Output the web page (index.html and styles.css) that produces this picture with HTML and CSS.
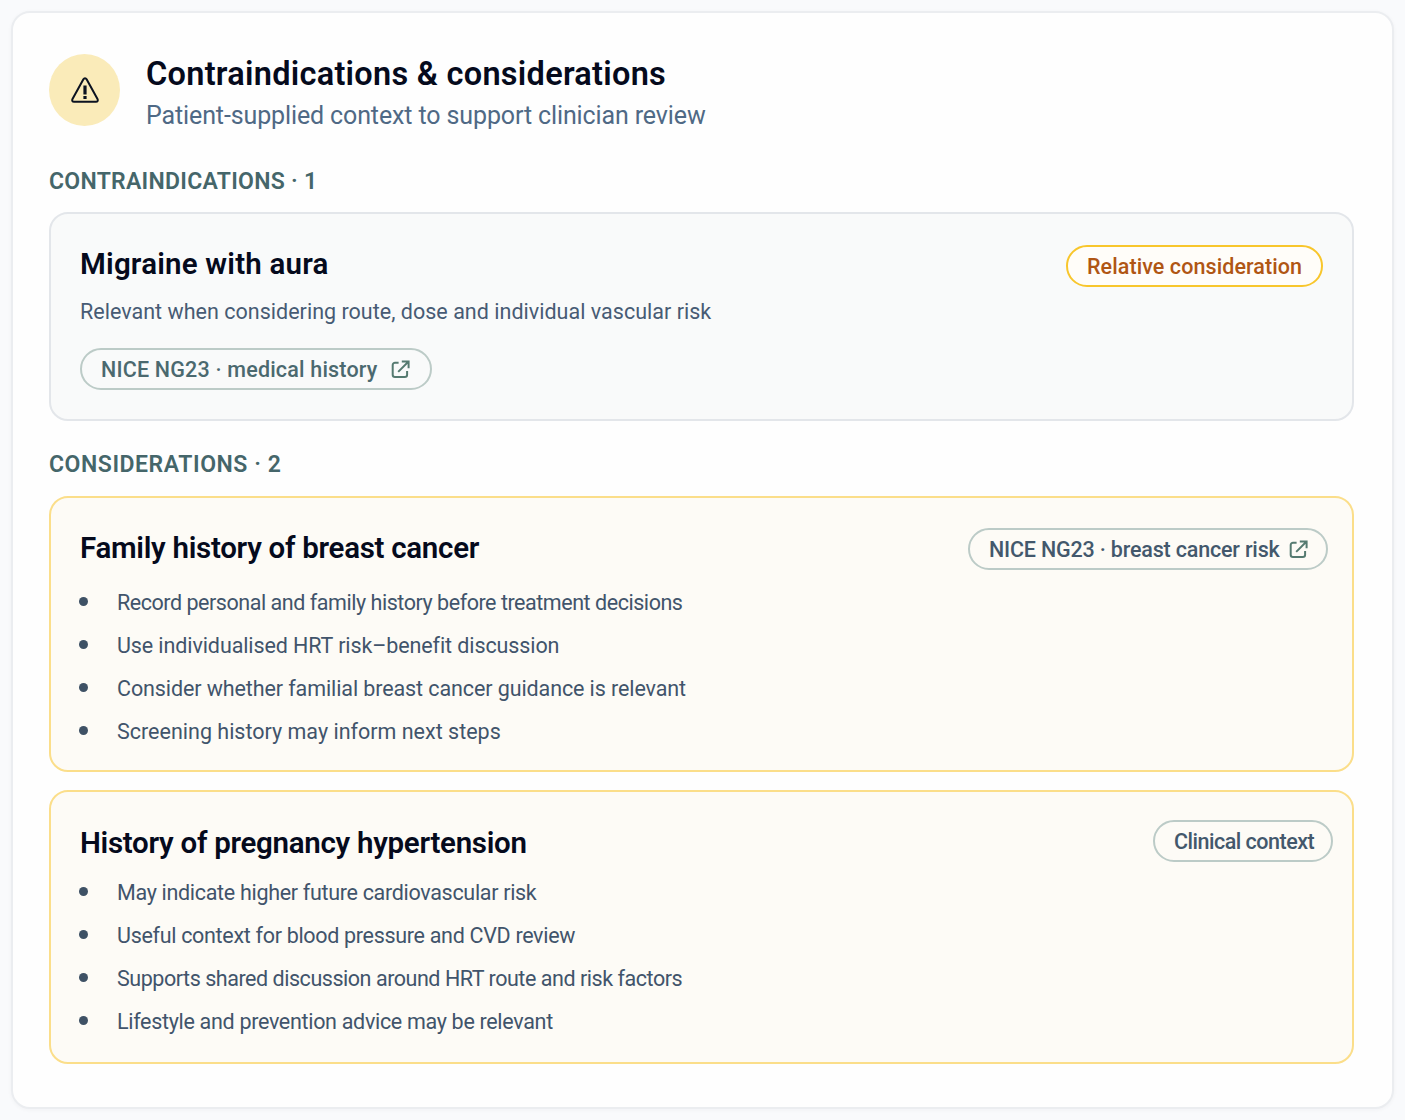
FILE: index.html
```html
<!DOCTYPE html>
<html lang="en">
<head>
    <meta charset="UTF-8">
    <title>Contraindications &amp; considerations</title>
    <link rel="stylesheet" href="styles.css">
</head>
<body>

<main class="panel">
    <header class="panel-header">
        <div class="warn-icon">
            <svg width="30" height="28" viewBox="0 0 30 28" fill="none" stroke="#0b1220">
                <path d="M13.4 3.2 2.5 23.1C1.7 24.5 2.4 25.7 4 25.7h22c1.6 0 2.3-1.2 1.5-2.6L16.6 3.2c-.8-1.4-2.4-1.4-3.2 0z" stroke-width="2" stroke-linejoin="round"/>
                <path d="M15 9.4v9M15 19.9v3.2" stroke-width="3.2"/>
            </svg>
        </div>
        <div>
            <h1 class="title">Contraindications &amp; considerations</h1>
            <p class="subtitle">Patient-supplied context to support clinician review</p>
        </div>
    </header>

    <h2 class="section">CONTRAINDICATIONS · 1</h2>
    <section class="card card-grey">
        <div>
            <h3 class="name name-wide">Migraine with aura</h3>
            <p class="desc">Relevant when considering route, dose and individual vascular risk</p>
            <a class="pill pill-source">NICE NG23 · medical history
                <svg width="19" height="19" viewBox="0 0 19 19" fill="none" stroke="#557a70" stroke-width="2">
                    <path d="M7.6 2.7H4A2.3 2.3 0 0 0 1.7 5v9.8A2.3 2.3 0 0 0 4 17.1h9.8a2.3 2.3 0 0 0 2.3-2.3v-3.9M10.8 1.5h6.8v6.8M17.3 1.8 7.2 11.9"/>
                </svg>
            </a>
        </div>
        <span class="pill pill-amber">Relative consideration</span>
    </section>

    <h2 class="section section-second">CONSIDERATIONS · 2</h2>
    <section class="card">
        <div>
            <h3 class="name">Family history of breast cancer</h3>
            <ul class="points">
                <li class="tight-3">Record personal and family history before treatment decisions</li>
                <li class="tight-1">Use individualised HRT risk–benefit discussion</li>
                <li class="tight-1">Consider whether familial breast cancer guidance is relevant</li>
                <li>Screening history may inform next steps</li>
            </ul>
        </div>
        <a class="pill pill-breast">NICE NG23 · breast cancer risk
            <svg width="19" height="19" viewBox="0 0 19 19" fill="none" stroke="#557a70" stroke-width="2">
                <path d="M7.6 2.7H4A2.3 2.3 0 0 0 1.7 5v9.8A2.3 2.3 0 0 0 4 17.1h9.8a2.3 2.3 0 0 0 2.3-2.3v-3.9M10.8 1.5h6.8v6.8M17.3 1.8 7.2 11.9"/>
            </svg>
        </a>
    </section>

    <section class="card card-pregnancy">
        <div>
            <h3 class="name">History of pregnancy hypertension</h3>
            <ul class="points">
                <li class="tight-2">May indicate higher future cardiovascular risk</li>
                <li class="tight-2">Useful context for blood pressure and CVD review</li>
                <li class="tight-3">Supports shared discussion around HRT route and risk factors</li>
                <li class="tight-2">Lifestyle and prevention advice may be relevant</li>
            </ul>
        </div>
        <span class="pill pill-context">Clinical context</span>
    </section>
</main>

</body>
</html>
```
FILE: styles.css
```css
* {
    box-sizing: border-box;
    margin: 0;
    padding: 0;
}

body {
    background-color: #f9fafc;
    font-family: Roboto, "Liberation Sans", sans-serif;
    padding: 11px;
}

.panel {
    width: 1383px;
    height: 1098px;
    padding: 41px 38px 0 36px;
    background-color: #fefefe;
    border: 2px solid #ebedf0;
    border-radius: 19px;
    box-shadow: 0 1px 4px rgba(15, 23, 42, 0.04);
}

.panel-header {
    display: flex;
    gap: 26px;
}

.warn-icon {
    display: flex;
    align-items: center;
    justify-content: center;
    width: 71px;
    height: 72px;
    border-radius: 50%;
    background-color: #faebb9;
}

.title {
    font-size: 32.5px;
    font-weight: 600;
    line-height: 40px;
    letter-spacing: 0.28px;
    color: #050a1c;
}

.subtitle {
    margin-top: 6px;
    font-size: 25px;
    line-height: 32px;
    letter-spacing: -0.12px;
    color: #4f6985;
}

.section {
    margin: 36px 0 16px;
    font-size: 23px;
    font-weight: 560;
    line-height: 28px;
    letter-spacing: 0.28px;
    color: #45666a;
}

.section-second {
    margin: 30px 0 17px;
    letter-spacing: 0.55px;
}

.card {
    display: flex;
    justify-content: space-between;
    align-items: flex-start;
    height: 276px;
    padding: 30px 24px 0 29px;
    background-color: #fdfbf6;
    border: 2px solid #fbde8a;
    border-radius: 19px;
}

.card-grey {
    height: 209px;
    padding: 31px 29px 0 29px;
    background-color: #f9fafa;
    border-color: #e3e6ea;
}

.card-pregnancy {
    height: 274px;
    margin-top: 18px;
    padding: 28px 19px 0 29px;
}

.name {
    margin-top: 2px;
    font-size: 29.5px;
    font-weight: 600;
    line-height: 36px;
    letter-spacing: -0.29px;
    color: #050a1c;
}

.name-wide {
    margin-top: 1px;
    letter-spacing: 0.2px;
}

.card-pregnancy .name {
    margin-top: 5px;
}

.desc {
    margin: 16px 0 22px;
    font-size: 21.5px;
    line-height: 28px;
    letter-spacing: 0.02px;
    color: #475b74;
}

.pill {
    display: flex;
    align-items: center;
    justify-content: space-between;
    height: 42px;
    padding: 1px 19px 0;
    border: 2px solid #bccbc7;
    border-radius: 21px;
    font-size: 21.5px;
    font-weight: 480;
    white-space: nowrap;
    color: #43586c;
}

.pill-source {
    width: 352px;
    padding-right: 20px;
    letter-spacing: 0.19px;
    color: #4b696f;
}

.pill-amber {
    width: 257px;
    background-color: #fffdf9;
    border-color: #f8c62c;
    letter-spacing: 0.08px;
    color: #b05614;
}

.pill-breast {
    width: 360px;
    padding-right: 18px;
    letter-spacing: -0.18px;
}

.pill-context {
    width: 180px;
    letter-spacing: -0.5px;
}

.points {
    margin-top: 22px;
    list-style: none;
}

.points li {
    display: flex;
    align-items: center;
    height: 28px;
    margin-bottom: 15px;
    font-size: 21.5px;
    color: #41546b;
}

.points li::before {
    content: "";
    width: 9px;
    height: 9px;
    margin: 0 29px 2px -1px;
    border-radius: 50%;
    background-color: #3e5165;
}

.card-pregnancy .points {
    margin-top: 17px;
}

.card-pregnancy .points li {
    margin-bottom: 15.3px;
}

.points .tight-1 {
    letter-spacing: -0.1px;
}

.points .tight-2 {
    letter-spacing: -0.31px;
}

.points .tight-3 {
    letter-spacing: -0.46px;
}
```
